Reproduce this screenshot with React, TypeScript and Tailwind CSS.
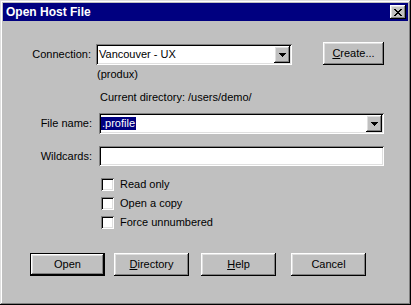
import React from 'react';

const raised =
  'shadow-[inset_-1px_-1px_0_#000,inset_1px_1px_0_#fff,inset_-2px_-2px_0_#808080,inset_2px_2px_0_#dfdfdf]';
const sunken =
  'shadow-[inset_1px_1px_0_#808080,inset_-1px_-1px_0_#fff,inset_2px_2px_0_#000,inset_-2px_-2px_0_#dfdfdf]';

const closeGlyph = [
  'XX....XX',
  '.XX..XX.',
  '..XXXX..',
  '...XX...',
  '..XXXX..',
  '.XX..XX.',
  'XX....XX',
];

function CloseIcon() {
  return (
    <svg width="8" height="7" viewBox="0 0 8 7" shapeRendering="crispEdges">
      {closeGlyph.map((row, y) =>
        row.split('').map((c, x) =>
          c === 'X' ? <rect key={`${x}-${y}`} x={x} y={y} width="1" height="1" fill="#000" /> : null
        )
      )}
    </svg>
  );
}

function DropArrow() {
  return (
    <div className={`w-[16px] h-[17px] bg-[#c0c0c0] flex items-center justify-center ${raised}`}>
      <svg width="7" height="4" viewBox="0 0 7 4" shapeRendering="crispEdges">
        <polygon points="0,0 7,0 3.5,4" fill="#000" />
      </svg>
    </div>
  );
}

function Button({ children, className = '', isDefault = false }: { children: React.ReactNode; className?: string; isDefault?: boolean }) {
  const bevel = isDefault
    ? 'shadow-[inset_0_0_0_1px_#000,inset_-2px_-2px_0_#000,inset_2px_2px_0_#fff,inset_-3px_-3px_0_#808080,inset_3px_3px_0_#dfdfdf]'
    : raised;
  return (
    <div className={`w-[75px] h-[23px] bg-[#c0c0c0] flex items-center justify-center ${bevel} ${className}`}>
      {children}
    </div>
  );
}

function Check({ label }: { label: string }) {
  return (
    <div className="h-[19px] flex items-center pl-[98px]">
      <div className={`w-[13px] h-[13px] bg-white ${sunken}`} />
      <span className="ml-[6px]">{label}</span>
    </div>
  );
}

export default function App() {
  return (
    <div className="w-[411px] h-[305px] bg-[#c0c0c0] p-[3px] flex flex-col font-['Liberation_Sans',Arial,sans-serif] shadow-[inset_-1px_-1px_0_#000,inset_1px_1px_0_#dfdfdf,inset_-2px_-2px_0_#808080,inset_2px_2px_0_#fff]">
      {/* Title bar */}
      <div className="h-[18px] bg-[#000080] flex items-center justify-between pl-[3px] pr-[2px]">
        <span className="text-[12px] font-bold text-white leading-none">Open Host File</span>
        <div className={`w-[16px] h-[14px] bg-[#c0c0c0] flex items-center justify-center ${raised}`}>
          <CloseIcon />
        </div>
      </div>

      <div className="flex-1 flex flex-col text-[11px] leading-[13px] text-black">
        {/* Connection */}
        <div className="mt-[21px] flex items-end">
          <div className="flex items-center">
            <span className="w-[88px] text-right">Connection:</span>
            <div className={`ml-[5px] w-[196px] h-[21px] bg-white flex items-center justify-between pl-[3px] pr-[2px] ${sunken}`}>
              <span>Vancouver - UX</span>
              <DropArrow />
            </div>
          </div>
          <div className={`ml-[31px] w-[61px] h-[23px] bg-[#c0c0c0] flex items-center justify-center ${raised}`}>
            <span><span className="underline">C</span>reate...</span>
          </div>
        </div>

        <div className="mt-[3px] pl-[94px]">(produx)</div>
        <div className="mt-[10px] pl-[97px]">Current directory: /users/demo/</div>

        {/* File name */}
        <div className="mt-[9px] flex items-center">
          <span className="w-[89px] text-right">File name:</span>
          <div className={`ml-[7px] w-[285px] h-[21px] bg-white flex items-center justify-between pl-[2px] pr-[2px] ${sunken}`}>
            <span className="bg-[#000080] text-white px-[1px]">.profile</span>
            <DropArrow />
          </div>
        </div>

        {/* Wildcards */}
        <div className="mt-[12px] flex items-center">
          <span className="w-[89px] text-right">Wildcards:</span>
          <div className={`ml-[7px] w-[285px] h-[20px] bg-white ${sunken}`} />
        </div>

        <div className="mt-[9px] flex flex-col">
          <Check label="Read only" />
          <Check label="Open a copy" />
          <Check label="Force unnumbered" />
        </div>

        {/* Buttons */}
        <div className="mt-[21px] flex pl-[27px]">
          <Button isDefault>Open</Button>
          <Button className="ml-[9px]"><span><span className="underline">D</span>irectory</span></Button>
          <Button className="ml-[12px]"><span><span className="underline">H</span>elp</span></Button>
          <Button className="ml-[15px]">Cancel</Button>
        </div>
      </div>
    </div>
  );
}
